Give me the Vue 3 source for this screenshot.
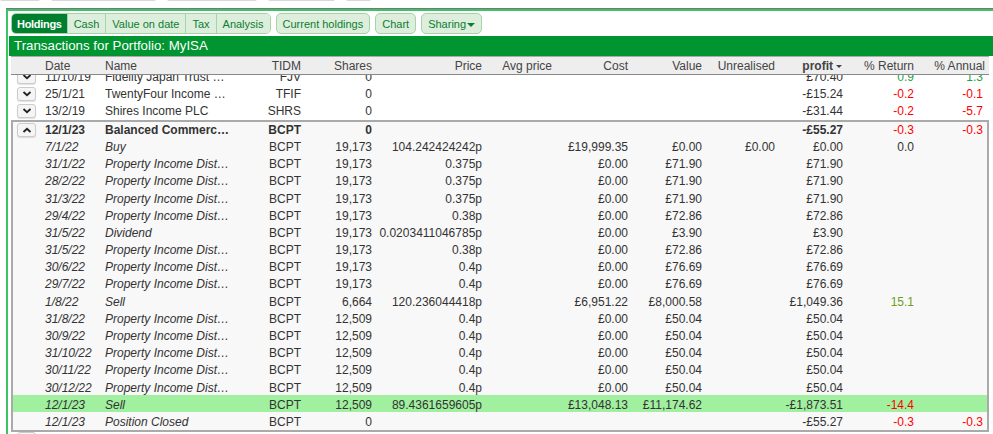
<script setup>
const columns = [
  { key: 'shares', label: 'Shares' },
  { key: 'price', label: 'Price' },
  { key: 'avg', label: 'Avg price' },
  { key: 'cost', label: 'Cost' },
  { key: 'value', label: 'Value' },
  { key: 'unreal', label: 'Unrealised' },
]
const tabs = [
  { label: 'Holdings', active: true },
  { label: 'Cash' },
  { label: 'Value on date' },
  { label: 'Tax' },
  { label: 'Analysis' },
]
const actions = ['Current holdings', 'Chart']
const stubs = [40, 105, 90, 67, 25]

const pid = 'Property Income Distribution'
const row = (date, name, shares, price, cost, value, profit, ret = '', ann = '', extra = {}) => ({
  date, name, tidm: 'BCPT', shares, price, avg: '', cost, value, unreal: '', profit, ret, ann, ...extra,
})
const top = [
  { date: '11/10/19', name: 'Fidelity Japan Trust PLC', tidm: 'FJV', shares: '0', profit: '£70.40', ret: '0.9', ann: '1.3' },
  { date: '25/1/21', name: 'TwentyFour Income Fund', tidm: 'TFIF', shares: '0', profit: '-£15.24', ret: '-0.2', ann: '-0.1' },
  { date: '13/2/19', name: 'Shires Income PLC', tidm: 'SHRS', shares: '0', profit: '-£31.44', ret: '-0.2', ann: '-5.7' },
]
const group = { date: '12/1/23', name: 'Balanced Commercial Property', tidm: 'BCPT', shares: '0', profit: '-£55.27', ret: '-0.3', ann: '-0.3' }
const details = [
  row('7/1/22', 'Buy', '19,173', '104.242424242p', '£19,999.35', '£0.00', '£0.00', '0.0', '', { unreal: '£0.00' }),
  row('31/1/22', pid, '19,173', '0.375p', '£0.00', '£71.90', '£71.90'),
  row('28/2/22', pid, '19,173', '0.375p', '£0.00', '£71.90', '£71.90'),
  row('31/3/22', pid, '19,173', '0.375p', '£0.00', '£71.90', '£71.90'),
  row('29/4/22', pid, '19,173', '0.38p', '£0.00', '£72.86', '£72.86'),
  row('31/5/22', 'Dividend', '19,173', '0.0203411046785p', '£0.00', '£3.90', '£3.90'),
  row('31/5/22', pid, '19,173', '0.38p', '£0.00', '£72.86', '£72.86'),
  row('30/6/22', pid, '19,173', '0.4p', '£0.00', '£76.69', '£76.69'),
  row('29/7/22', pid, '19,173', '0.4p', '£0.00', '£76.69', '£76.69'),
  row('1/8/22', 'Sell', '6,664', '120.236044418p', '£6,951.22', '£8,000.58', '£1,049.36', '15.1'),
  row('31/8/22', pid, '12,509', '0.4p', '£0.00', '£50.04', '£50.04'),
  row('30/9/22', pid, '12,509', '0.4p', '£0.00', '£50.04', '£50.04'),
  row('31/10/22', pid, '12,509', '0.4p', '£0.00', '£50.04', '£50.04'),
  row('30/11/22', pid, '12,509', '0.4p', '£0.00', '£50.04', '£50.04'),
  row('30/12/22', pid, '12,509', '0.4p', '£0.00', '£50.04', '£50.04'),
  row('12/1/23', 'Sell', '12,509', '89.4361659605p', '£13,048.13', '£11,174.62', '-£1,873.51', '-14.4', '', { hit: true }),
  row('12/1/23', 'Position Closed', '0', '', '', '', '-£55.27', '-0.3', '-0.3'),
]
const tone = (v) => {
  if (!v) return ''
  const n = parseFloat(v)
  if (n < 0) return 'neg'
  if (n >= 10) return 'olive'
  if (n > 0) return 'pos'
  return ''
}
</script>

<template>
  <div class="page">
    <div class="stubs">
      <span v-for="(w, i) in stubs" :key="i" class="stub" :style="{ width: w + 'px' }"></span>
    </div>
    <div class="frame">
      <div class="toolbar">
        <div class="seg">
          <button v-for="t in tabs" :key="t.label" class="tab" :class="{ active: t.active }">{{ t.label }}</button>
        </div>
        <button v-for="a in actions" :key="a" class="tab solo">{{ a }}</button>
        <button class="tab solo">Sharing<span class="caret"></span></button>
      </div>
      <div class="title">Transactions for Portfolio: MyISA</div>

      <div class="grid head">
        <span></span>
        <span>Date</span>
        <span>Name</span>
        <span class="r">TIDM</span>
        <span v-for="c in columns" :key="c.key" class="r">{{ c.label }}</span>
        <span class="r sort">profit<i class="sort-caret"></i></span>
        <span class="r">% Return</span>
        <span class="r">% Annual</span>
      </div>

      <div class="body">
        <div class="list">
          <div v-for="r in top" :key="r.tidm" class="grid line">
            <button class="toggle">
              <svg viewBox="0 0 10 6" width="10" height="6"><path d="M1.5 1 5 4.2 8.500 1" /></svg>
            </button>
            <span class="date">{{ r.date }}</span>
            <span class="name">{{ r.name }}</span>
            <span class="r">{{ r.tidm }}</span>
            <span class="r">{{ r.shares }}</span>
            <span></span><span></span><span></span><span></span><span></span>
            <span class="r">{{ r.profit }}</span>
            <span class="r" :class="tone(r.ret)">{{ r.ret }}</span>
            <span class="r ann" :class="tone(r.ann)">{{ r.ann }}</span>
          </div>
        </div>

        <div class="box">
          <div class="grid line group">
            <button class="toggle">
              <svg viewBox="0 0 10 6" width="10" height="6"><path d="M1.5 5 5 1.800 8.500 5" /></svg>
            </button>
            <span class="date">{{ group.date }}</span>
            <span class="name">{{ group.name }}</span>
            <span class="r">{{ group.tidm }}</span>
            <span class="r">{{ group.shares }}</span>
            <span></span><span></span><span></span><span></span><span></span>
            <span class="r">{{ group.profit }}</span>
            <span class="r neg plain">{{ group.ret }}</span>
            <span class="r ann neg plain">{{ group.ann }}</span>
          </div>
          <div v-for="(d, i) in details" :key="i" class="grid line" :class="{ hit: d.hit }">
            <span></span>
            <span class="date em">{{ d.date }}</span>
            <span class="name em">{{ d.name }}</span>
            <span class="r">{{ d.tidm }}</span>
            <span class="r">{{ d.shares }}</span>
            <span class="r">{{ d.price }}</span>
            <span class="r">{{ d.avg }}</span>
            <span class="r">{{ d.cost }}</span>
            <span class="r">{{ d.value }}</span>
            <span class="r">{{ d.unreal }}</span>
            <span class="r">{{ d.profit }}</span>
            <span class="r" :class="tone(d.ret)">{{ d.ret }}</span>
            <span class="r ann" :class="tone(d.ann)">{{ d.ann }}</span>
          </div>
        </div>
        <button class="toggle next"></button>
      </div>
    </div>
  </div>
</template>

<style scoped>
.page {
  width: 993px;
  height: 434px;
  overflow: hidden;
  background: #fff;
  font-family: "Liberation Sans", Arial, sans-serif;
  font-size: 12px;
  color: #333;
}
.stubs {
  height: 8px;
  display: flex;
  gap: 11px;
  overflow: hidden;
}
.stub {
  height: 2px;
  margin-top: -1px;
  background: #d8d8d8;
  border-radius: 0 0 4px 4px;
}
.frame {
  margin-left: 6px;
  border-top: 1px solid #777;
  box-shadow: inset 2px 2px 0 #3cc464;
  padding: 4px 0 0 2px;
}
.toolbar {
  display: flex;
  height: 21px;
  gap: 5px;
  margin: 0 0 2px 3px;
}
.seg {
  display: flex;
  border-radius: 5px;
  overflow: hidden;
  border: 1px solid #a4d4a8;
}
.tab {
  font: inherit;
  font-size: 11px;
  padding: 0 6px;
  border: 0;
  border-left: 1px solid #a4d4a8;
  background: #deeedd;
  color: #0c7d30;
  white-space: nowrap;
}
.tab:first-child {
  border-left: 0;
}
.tab.active {
  padding: 0 5px;
  background: #00802f;
  color: #fff;
  font-weight: bold;
  letter-spacing: -0.3px;
}
.tab.solo {
  border: 1px solid #a4d4a8;
  border-radius: 5px;
  padding: 0 6px;
}
.caret {
  display: inline-block;
  margin-left: 1px;
  border-left: 4px solid transparent;
  border-right: 4px solid transparent;
  border-top: 4px solid #0c7d30;
  vertical-align: 1px;
}
.title {
  height: 20px;
  line-height: 20px;
  margin-left: 1px;
  padding-left: 5px;
  background: #009530;
  color: #fff;
  font-size: 13.3px;
}
.grid {
  display: grid;
  grid-template-columns: var(--lead, 34px) 60px 125px 71px 71px 110px 70px 76px 74px 73px 68px 71px 71px;
  align-items: center;
  white-space: nowrap;
}
.head {
  height: 19px;
  margin: 0 4px 0 3px;
  background: #eee;
  border-top: 1px solid #aaa;
  border-bottom: 1px solid #888;
  color: #444;
  box-sizing: border-box;
}
.r {
  text-align: right;
}
.sort {
  font-weight: bold;
  padding-right: 1px;
}
.sort-caret {
  display: inline-block;
  margin-left: 3px;
  border-left: 3px solid transparent;
  border-right: 3px solid transparent;
  border-top: 3px solid #444;
  vertical-align: 2px;
}
.body {
  margin: 0 4px 0 3px;
  height: 359px;
  overflow: hidden;
}
.list {
  margin-top: -7.6px;
}
.line {
  box-sizing: border-box;
  height: 17.2px;
  padding-top: 2px;
  line-height: 14px;
}
.name {
  overflow: hidden;
  text-overflow: ellipsis;
}
.em {
  font-style: italic;
}
.ann {
  padding-right: 2px;
}
.neg {
  color: #f00;
}
.plain {
  font-weight: normal;
}
.pos {
  color: #1fa34a;
}
.olive {
  color: #6f9e1d;
}
.toggle {
  display: flex;
  align-items: center;
  justify-content: center;
  box-sizing: border-box;
  width: 19px;
  height: 14px;
  margin-left: 6px;
  padding: 0;
  border: 1px solid #ccc;
  border-radius: 3px;
  background: #f5f5f5;
  box-shadow: 0 1px 1px rgba(0, 0, 0, 0.12);
}
.toggle path {
  fill: none;
  stroke: #222;
  stroke-width: 1.800;
}
.box {
  --lead: 32px;
  margin-top: 1px;
  border: 2px solid #aaa;
  background: #f8f8f8;
}
.box .toggle {
  margin-left: 4px;
}
.group {
  height: 15.4px;
  padding-top: 0;
  font-weight: bold;
}
.hit {
  background: #a0f0a0;
}
.next {
  margin-top: 0;
}
</style>

<style>
html, body {
  margin: 0;
  overflow: hidden;
}
</style>
